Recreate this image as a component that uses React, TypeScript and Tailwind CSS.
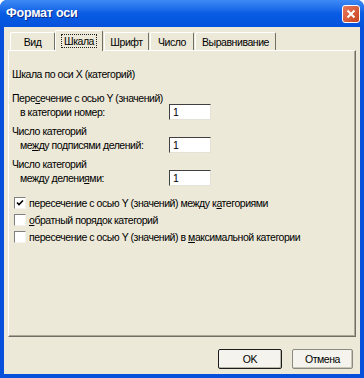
import React from 'react'

const font = { fontFamily: '"Liberation Sans", Arial, sans-serif' }

const Tab = ({ label, w, active }: { label: string; w: number; active?: boolean }) =>
  active ? (
    <div className="relative z-10 -mb-px h-[21px] flex items-center justify-center bg-[#ece9d8] border border-white border-r-[#716f64] border-b-0 rounded-t-[2px]"
      style={{ width: w }}>
      <span className="px-[2px] leading-[12px] outline-1 outline-dotted outline-[#222]">{label}</span>
    </div>
  ) : (
    <div className="h-[18px] flex items-center justify-center bg-[#ece9d8] border border-white border-r-[#716f64] border-b-0 rounded-t-[2px]"
      style={{ width: w }}>
      <span className="leading-[12px]">{label}</span>
    </div>
  )

const Field = () => (
  <div className="w-[42px] h-[16px] bg-white border border-t-[#404040] border-l-[#404040] border-r-[#e4e2d6] border-b-[#e4e2d6] pl-[3px] flex items-center leading-[12px]">1</div>
)

const Check = ({ on, children }: { on?: boolean; children: React.ReactNode }) => (
  <div className="h-[17px] flex items-center">
    <div className="w-[12px] h-[12px] ml-[2px] bg-white border border-t-[#808080] border-l-[#808080] border-r-[#f4f3ee] border-b-[#f4f3ee] flex items-center justify-center">
      {on && (
        <svg width="8" height="8" viewBox="0 0 8 8">
          <path d="M1 3.5 L3 5.5 L7 1.5" stroke="#000" strokeWidth="1.6" fill="none" />
        </svg>
      )}
    </div>
    <span className="ml-[3px] leading-[12px]">{children}</span>
  </div>
)

export default function App() {
  return (
    <div className="w-[364px] h-[378px] flex flex-col bg-[#0650dc] rounded-t-[7px] overflow-hidden text-[10.5px] tracking-[-0.45px] text-black" style={font}>
      {/* title bar */}
      <div className="h-[27px] shrink-0 flex items-center justify-between pl-[6px] pr-[4px] bg-gradient-to-b from-[#3d8af5] via-[#0a5ce4] to-[#0452dc]">
        <span className="text-white font-bold text-[12.5px] tracking-[-0.2px] leading-none [text-shadow:1px_1px_0_#0a2a8a]">Формат оси</span>
        <div className="w-[18px] h-[18px] rounded-[3px] border border-white bg-gradient-to-br from-[#e8795a] to-[#c7421e] flex items-center justify-center">
          <svg width="10" height="10" viewBox="0 0 10 10">
            <path d="M1.5 1.5 L8.5 8.5 M8.5 1.5 L1.5 8.5" stroke="#fff" strokeWidth="2" />
          </svg>
        </div>
      </div>

      {/* body */}
      <div className="flex-1 mx-[4px] mb-[4px] bg-[#ece9d8] flex flex-col">
        <div className="flex items-end pl-[6px] pt-[3px]">
          <Tab label="Вид" w={45} />
          <Tab label="Шкала" w={48} active />
          <div className="w-[1px]" />
          <Tab label="Шрифт" w={45} />
          <div className="w-[1px]" />
          <Tab label="Число" w={44} />
          <div className="w-[1px]" />
          <Tab label="Выравнивание" w={81} />
        </div>

        <div className="flex-1 mx-[4px] bg-[#ece9d8] border border-white border-r-[#716f64] border-b-[#716f64] shadow-[inset_-1px_-1px_0_#aca899] pl-[3px] pt-[17px]">
          <div className="leading-[13px]">Шкала по оси X (категорий)</div>

          <div className="mt-[11px] leading-[12px]">Пере<u>с</u>ечение с осью Y (значений)</div>
          <div className="h-[16px] flex items-center">
            <span className="w-[157px] pl-[8px] leading-[12px]">в категории номер:</span>
            <Field />
          </div>

          <div className="mt-[5px] leading-[12px]">Число категорий</div>
          <div className="h-[16px] flex items-center">
            <span className="w-[157px] pl-[8px] leading-[12px]">ме<u>ж</u>ду подписями делений:</span>
            <Field />
          </div>

          <div className="mt-[5px] leading-[12px]">Число категорий</div>
          <div className="h-[16px] flex items-center">
            <span className="w-[157px] pl-[8px] leading-[12px]">между делени<u>я</u>ми:</span>
            <Field />
          </div>

          <div className="mt-[8px]">
            <Check on>пересечение с осью Y (значений) между к<u>а</u>тегориями</Check>
            <Check><u>о</u>братный порядок категорий</Check>
            <Check>пересечение с осью Y (значений) в <u>м</u>аксимальной категории</Check>
          </div>
        </div>

        <div className="h-[37px] shrink-0 flex items-start justify-end gap-[10px] pt-[12px] pr-[7px]">
          <button className="w-[64px] h-[20px] bg-[#f4f3ee] border border-[#1c1c1c] rounded-[2px] shadow-[inset_-1px_-1px_0_#b8b5a6] leading-none">OK</button>
          <button className="w-[61px] h-[20px] bg-[#f4f3ee] border border-[#8a8a80] rounded-[2px] shadow-[inset_-1px_-1px_0_#c8c5b6] leading-none">Отмена</button>
        </div>
      </div>
    </div>
  )
}
